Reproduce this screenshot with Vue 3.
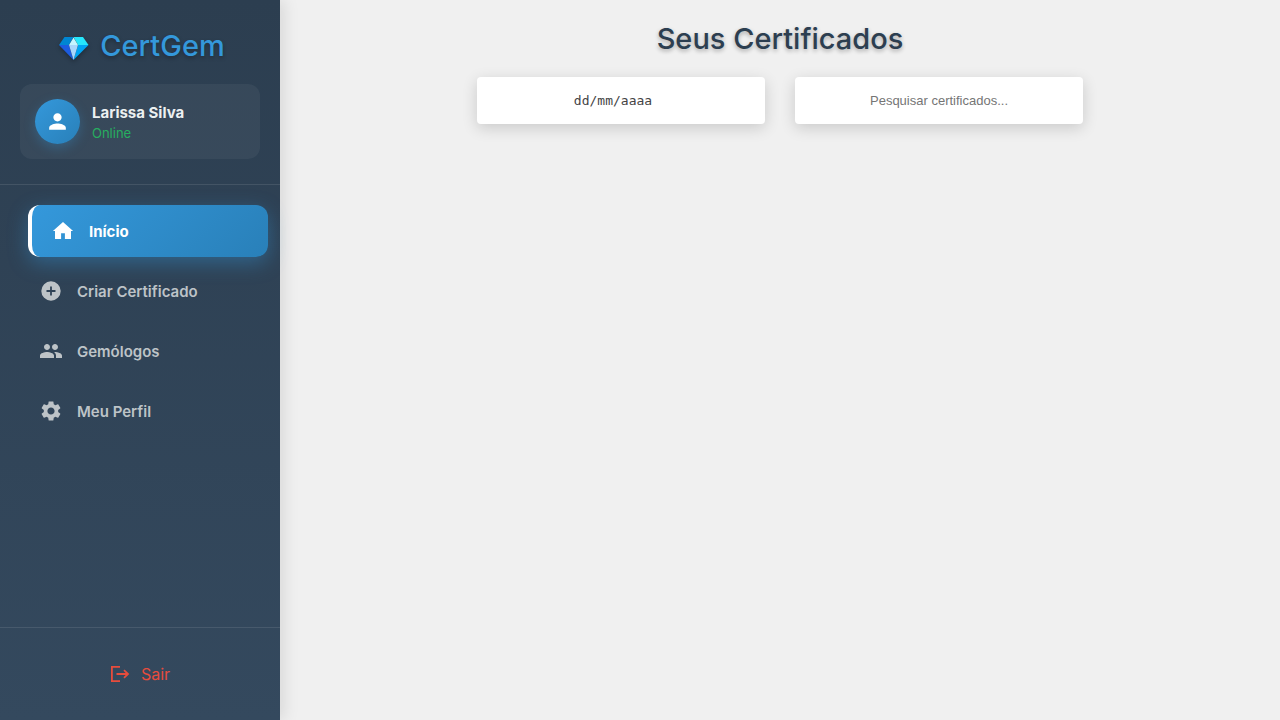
<script setup>
import { ref } from 'vue'

const date = ref('')
const query = ref('')
const active = ref('inicio')

const items = [
  {
    id: 'inicio',
    label: 'Início',
    path: 'M4 20v-8H1.900L12 2.900 22.100 12H20v8h-6.100v-5.800h-3.800V20z'
  },
  {
    id: 'criar',
    label: 'Criar Certificado',
    path: 'M12 2.300a9.700 9.700 0 1 0 0 19.400 9.700 9.700 0 0 0 0-19.400zM16.500 12.900h-3.600v3.600h-1.800v-3.600H7.500v-1.800h3.600V7.500h1.800v3.600h3.600z'
  },
  {
    id: 'gemologos',
    label: 'Gemólogos',
    path: 'M16 11c1.66 0 2.99-1.34 2.99-3S17.66 5 16 5s-3 1.34-3 3 1.34 3 3 3zm-8 0c1.66 0 2.99-1.34 2.99-3S9.66 5 8 5 5 6.34 5 8s1.34 3 3 3zm0 2c-2.33 0-7 1.17-7 3.5V19h14v-2.5c0-2.33-4.67-3.5-7-3.5zm8 0c-.29 0-.62.02-.97.05 1.16.84 1.97 1.97 1.97 3.45V19h6v-2.5c0-2.33-4.67-3.5-7-3.5z'
  },
  {
    id: 'perfil',
    label: 'Meu Perfil',
    path: 'M19.14 12.94c.04-.3.06-.61.06-.94 0-.32-.02-.64-.07-.94l2.03-1.58c.18-.14.23-.41.12-.61l-1.92-3.32c-.12-.22-.37-.29-.59-.22l-2.39.96c-.5-.38-1.03-.7-1.62-.94l-.36-2.54c-.04-.24-.24-.41-.48-.41h-3.84c-.24 0-.43.17-.47.41l-.36 2.54c-.59.24-1.13.57-1.62.94l-2.39-.96c-.22-.08-.47 0-.59.22L2.74 8.87c-.12.21-.08.47.12.61l2.03 1.58c-.05.3-.09.63-.09.94s.02.64.07.94l-2.03 1.58c-.18.14-.23.41-.12.61l1.92 3.32c.12.22.37.29.59.22l2.39-.96c.5.38 1.03.7 1.62.94l.36 2.54c.05.24.24.41.48.41h3.84c.24 0 .44-.17.47-.41l.36-2.54c.59-.24 1.13-.56 1.62-.94l2.39.96c.22.08.47 0 .59-.22l1.92-3.32c.12-.22.07-.47-.12-.61l-2.01-1.58zM12 15.6c-1.98 0-3.6-1.62-3.6-3.6s1.62-3.6 3.6-3.6 3.6 1.62 3.6 3.6-1.62 3.6-3.6 3.6z'
  }
]
</script>

<template>
  <div class="layout">
    <aside class="sidebar">
      <header class="sidebar-header">
        <div class="logo">
          <svg class="gem" viewBox="0 0 30 24" aria-hidden="true">
            <path fill="#0086d2" d="M5.500 1H14.500L10 9H0z" />
            <path fill="#26e6fb" d="M14.500 1H24L29.500 9H19z" />
            <path fill="#1c5ce0" d="M0 9H10L14.500 24z" />
            <path fill="#00a4f2" d="M19 9H29.500L14.500 24z" />
            <path fill="#a9d6fc" d="M10 9H19L14.500 24z" />
            <path fill="#c5f5ff" d="M14.500 1.500L19 9H10z" />
          </svg>
          <span>CertGem</span>
        </div>
        <div class="user">
          <div class="avatar">
            <svg viewBox="0 0 24 24" aria-hidden="true">
              <path d="M12 12c2.210 0 4-1.790 4-4s-1.790-4-4-4-4 1.790-4 4 1.790 4 4 4zm0 2c-2.670 0-8 1.340-8 4v2h16v-2c0-2.660-5.330-4-8-4z" />
            </svg>
          </div>
          <div>
            <div class="name">Larissa Silva</div>
            <div class="status">Online</div>
          </div>
        </div>
      </header>

      <nav class="nav">
        <a
          v-for="item in items"
          :key="item.id"
          href="#"
          class="nav-item"
          :class="{ active: active === item.id }"
          @click.prevent="active = item.id"
        >
          <svg viewBox="1 1 22 22" aria-hidden="true"><path :d="item.path" /></svg>
          <span>{{ item.label }}</span>
        </a>
      </nav>

      <footer class="sidebar-footer">
        <button type="button" class="logout">
          <svg viewBox="0 0 20 20" aria-hidden="true">
            <path d="M10 2.900H1.900v14.200H10M6.500 10h11.500M14 6.200l4 3.800-4 3.800" />
          </svg>
          <span>Sair</span>
        </button>
      </footer>
    </aside>

    <main class="content">
      <h1>Seus Certificados</h1>
      <div class="filters">
        <input v-model="date" class="date" type="text" placeholder="dd/mm/aaaa" aria-label="Data" />
        <input v-model="query" type="text" placeholder="Pesquisar certificados..." aria-label="Pesquisar certificados" />
      </div>
    </main>
  </div>
</template>

<style>
body {
  margin: 0;
  background: #f0f0f0;
}
</style>

<style scoped>
.layout {
  display: flex;
  min-height: 100vh;
  font-family: Inter, "Liberation Sans", sans-serif;
  background: #f0f0f0;
}
.layout * {
  box-sizing: border-box;
}
.sidebar {
  display: flex;
  flex-direction: column;
  flex: 0 0 280px;
  background: linear-gradient(180deg, #2c3e50 0%, #34495e 100%);
  box-shadow: 4px 0 15px rgba(0, 0, 0, 0.1);
}
.sidebar-header {
  padding: 24px 20px 25px;
  border-bottom: 1px solid rgba(255, 255, 255, 0.1);
}
.logo {
  display: flex;
  align-items: center;
  justify-content: center;
  gap: 11px;
  margin-bottom: 16px;
  padding-left: 4px;
  font-size: 29px;
  line-height: 44px;
  font-weight: 500;
  color: #3498db;
  text-shadow: 0 2px 4px rgba(0, 0, 0, 0.3);
}
.gem {
  width: 30px;
  height: 24px;
  margin-top: 4px;
  filter: drop-shadow(0 2px 2px rgba(0, 0, 0, 0.3));
}
.user {
  display: flex;
  align-items: center;
  gap: 12px;
  padding: 15px;
  border-radius: 12px;
  background: rgba(255, 255, 255, 0.05);
}
.avatar {
  display: flex;
  align-items: center;
  justify-content: center;
  width: 45px;
  height: 45px;
  border-radius: 50%;
  background: linear-gradient(135deg, #3498db, #2980b9);
  box-shadow: 0 4px 12px rgba(52, 152, 219, 0.3);
}
.avatar svg {
  width: 25px;
  height: 25px;
  fill: #fff;
}
.name {
  font-size: 15px;
  line-height: 22px;
  font-weight: 700;
  color: #ecf0f1;
}
.status {
  font-size: 13px;
  line-height: 18px;
  font-weight: 400;
  color: #27ae60;
}
.nav {
  display: flex;
  flex: 1;
  flex-direction: column;
  gap: 8px;
  padding: 20px;
}
.nav-item {
  display: flex;
  align-items: center;
  gap: 15px;
  height: 52px;
  padding: 0 20px;
  border-radius: 12px;
  font-size: 15px;
  font-weight: 600;
  color: #bdc3c7;
  text-decoration: none;
}
.nav-item svg {
  width: 22px;
  height: 22px;
  fill: currentColor;
}
.nav-item.active {
  margin: 0 -8px 0 8px;
  border-left: 4px solid #fff;
  background: linear-gradient(135deg, #3498db, #2980b9);
  box-shadow: 0 6px 20px rgba(52, 152, 219, 0.4);
  color: #fff;
  font-weight: 700;
}
.sidebar-footer {
  padding: 20px;
  border-top: 1px solid rgba(255, 255, 255, 0.1);
}
.logout {
  display: flex;
  align-items: center;
  justify-content: center;
  gap: 11px;
  width: 100%;
  height: 52px;
  border: 0;
  border-radius: 12px;
  background: none;
  color: #e74c3c;
  font: 400 16px Inter, "Liberation Sans", sans-serif;
  cursor: pointer;
}
.logout svg {
  width: 20px;
  height: 20px;
  fill: none;
  stroke: currentColor;
  stroke-width: 1.800;
}
.content {
  flex: 1;
  min-width: 0;
  padding: 20px;
}
h1 {
  margin: 0 0 19px;
  font-size: 29px;
  line-height: 38px;
  font-weight: 500;
  text-align: center;
  color: #2c3e50;
  text-shadow: 0 2px 4px rgba(0, 0, 0, 0.3);
}
.filters {
  display: flex;
  justify-content: center;
  gap: 30px;
}
.filters input {
  width: 30%;
  height: 47px;
  padding: 0 15px;
  border: 0;
  border-radius: 4px;
  background: #fff;
  box-shadow: 0 4px 15px rgba(0, 0, 0, 0.16);
  font: 13px "Liberation Sans", sans-serif;
  text-align: center;
  color: #333;
}
.filters input::placeholder {
  color: #757575;
}
.filters .date {
  padding-right: 31px;
  font-family: "DejaVu Sans Mono", monospace;
}
.filters .date::placeholder {
  color: #444;
}
</style>
